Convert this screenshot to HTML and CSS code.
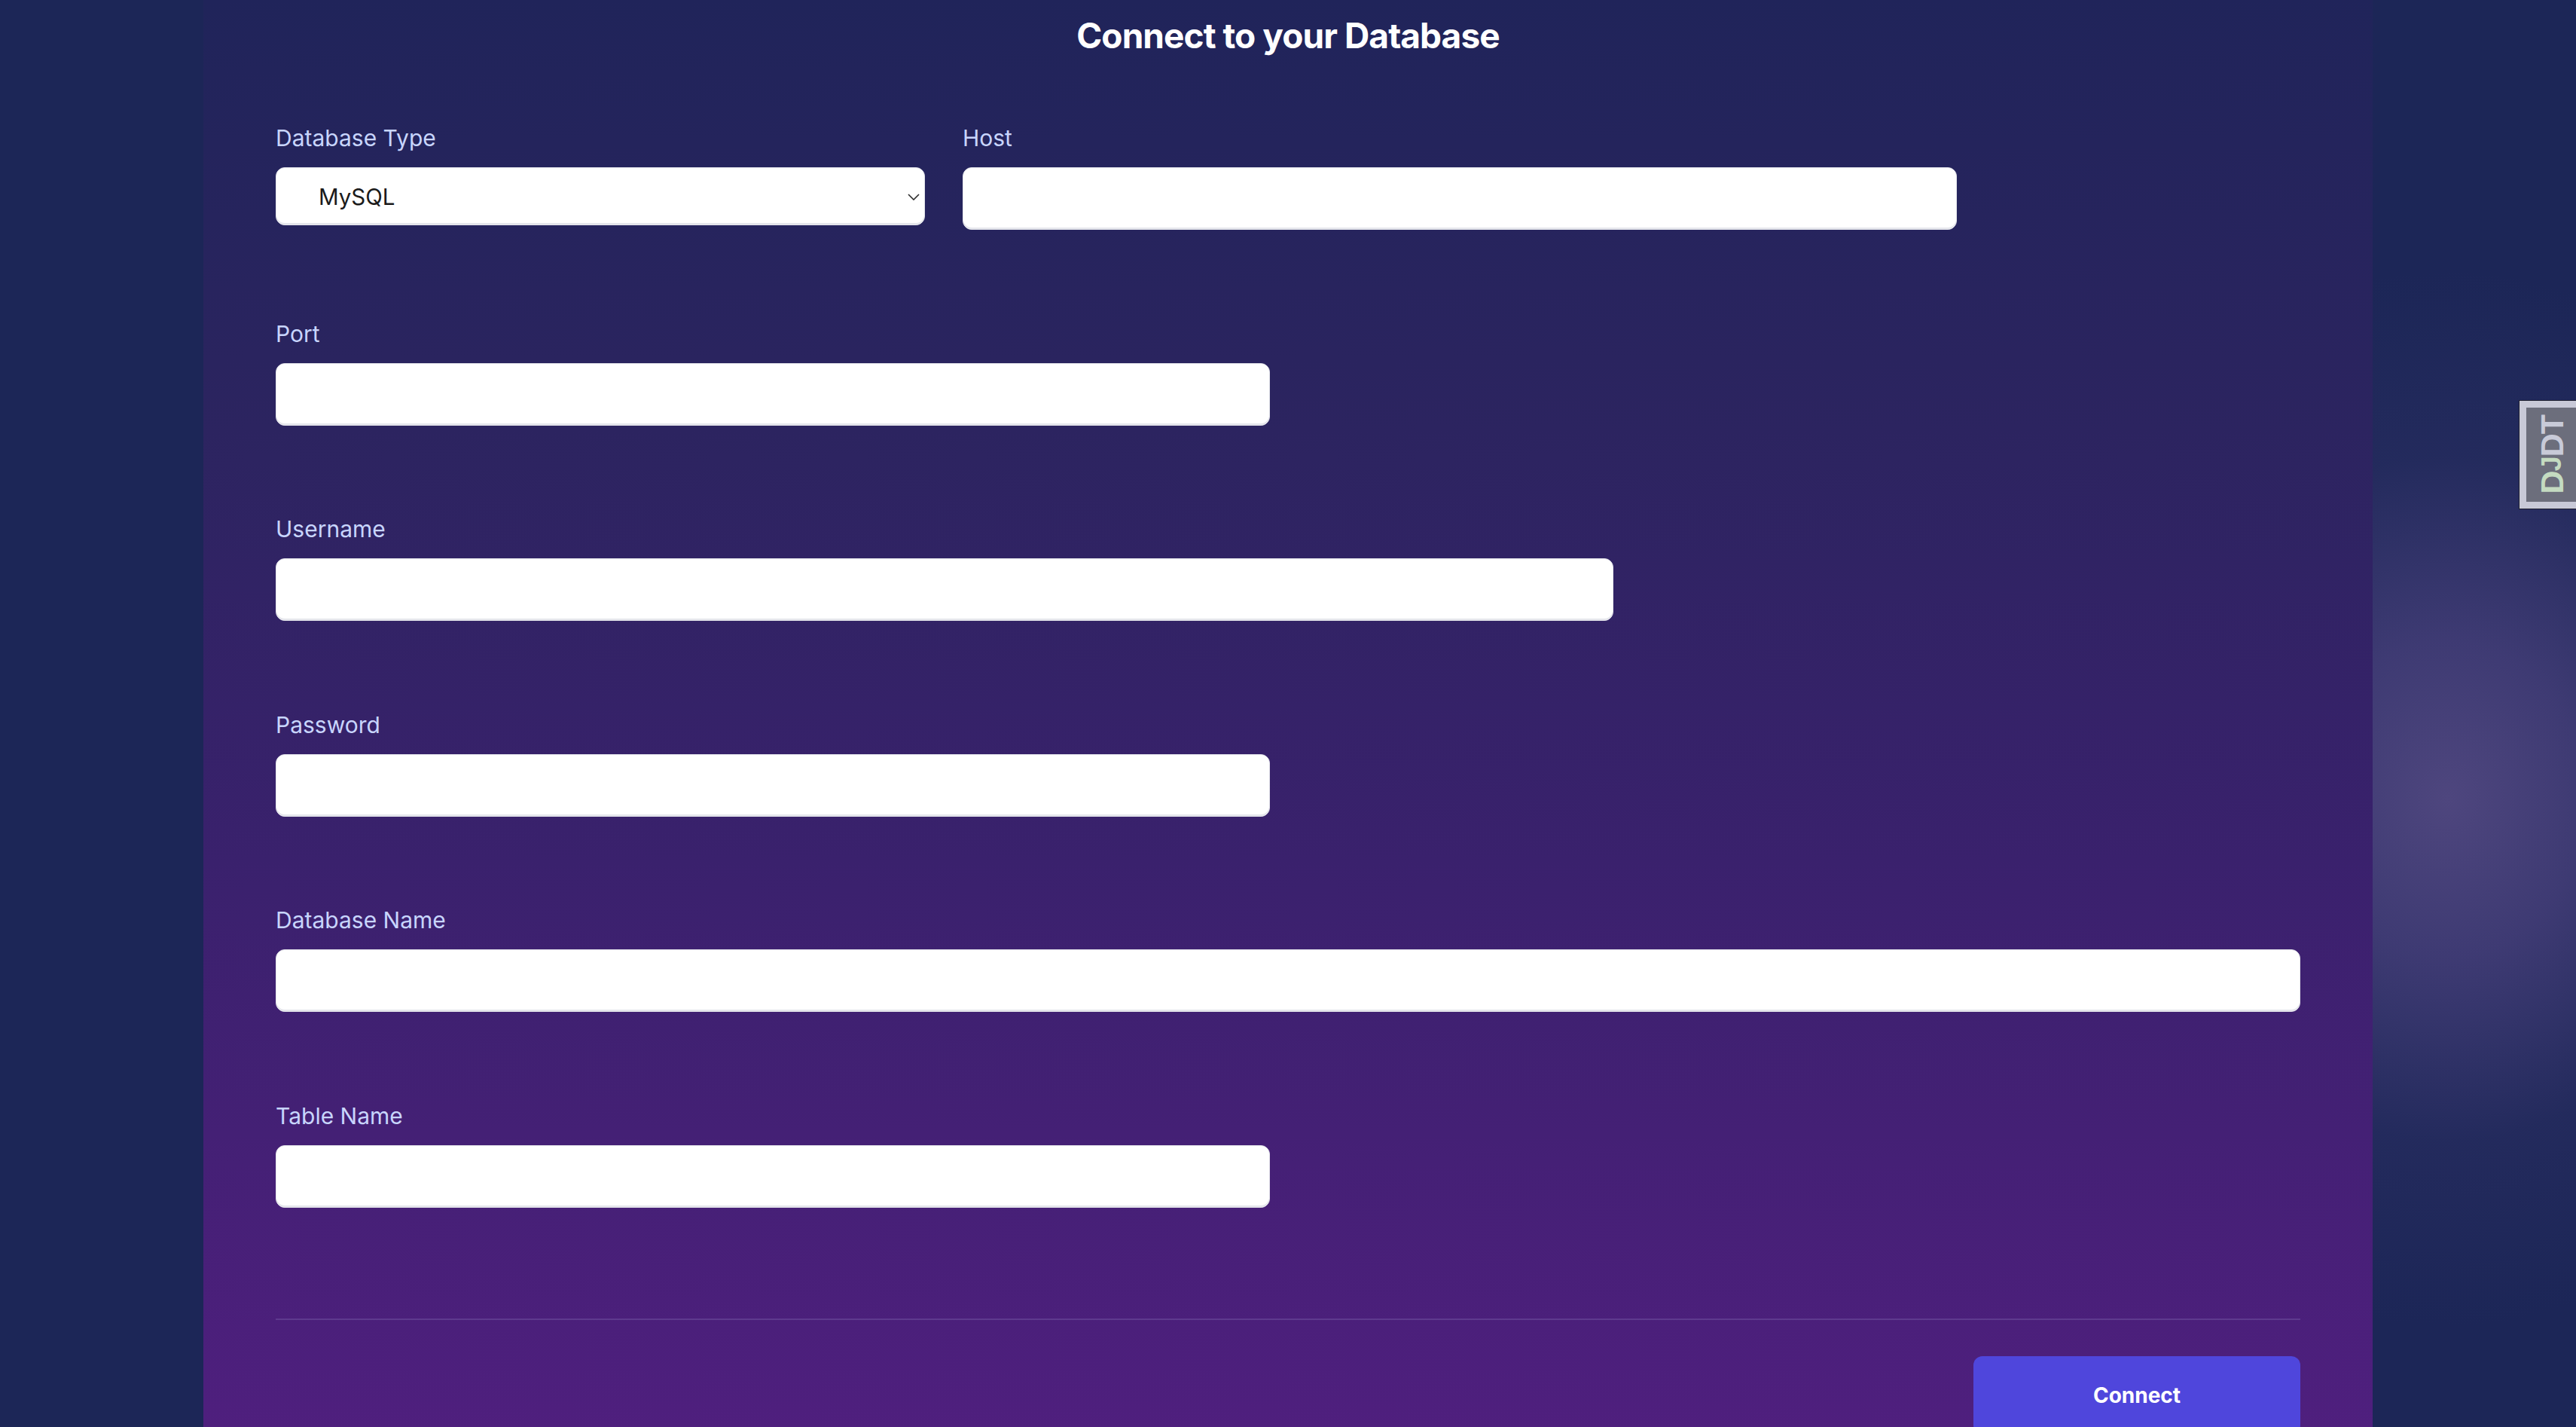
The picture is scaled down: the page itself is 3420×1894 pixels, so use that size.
FILE: index.html
```html
<!DOCTYPE html>
<html lang="en">
<head>
<meta charset="utf-8">
<title>Connect to your Database</title>
<link rel="stylesheet" href="styles.css">
</head>
<body>
<main class="card">
  <h1 class="title">Connect to your Database</h1>
  <form class="form">
    <div class="row">
      <div class="field">
        <label class="label" for="dbtype">Database Type</label>
        <div class="select-wrap">
          <select id="dbtype" class="select">
            <option>MySQL</option>
            <option>PostgreSQL</option>
            <option>SQLite</option>
          </select>
          <svg class="chevron" viewBox="0 0 16 9" width="16" height="9" aria-hidden="true"><path d="M1 1l7 7 7-7" fill="none" stroke="#2b2b2b" stroke-width="1.6"/></svg>
        </div>
      </div>
      <div class="field">
        <label class="label" for="host">Host</label>
        <input id="host" class="input w-host" type="text">
      </div>
    </div>
    <div class="field">
      <label class="label" for="port">Port</label>
      <input id="port" class="input w-half" type="text">
    </div>
    <div class="field">
      <label class="label" for="user">Username</label>
      <input id="user" class="input w-user" type="text">
    </div>
    <div class="field">
      <label class="label" for="pass">Password</label>
      <input id="pass" class="input w-half" type="password">
    </div>
    <div class="field">
      <label class="label" for="dbname">Database Name</label>
      <input id="dbname" class="input w-full" type="text">
    </div>
    <div class="field">
      <label class="label" for="table">Table Name</label>
      <input id="table" class="input w-half" type="text">
    </div>
    <hr class="divider">
    <div class="actions">
      <button class="btn" type="button">Connect</button>
    </div>
  </form>
</main>
<div class="djdt"><div class="djdt-inner"><span class="djdt-text"><span class="djdt-d">D</span><span class="djdt-j">J</span>DT</span></div></div>
</body>
</html>
```

FILE: styles.css
```css
html, body {
  margin: 0;
  padding: 0;
}
body {
  min-height: 100vh;
  overflow: hidden;
  font-family: Inter, "Noto Sans", "Liberation Sans", sans-serif;
  background-color: #1c2657;
  background-image: radial-gradient(ellipse 600px 700px at 3250px 1060px, rgba(78, 70, 126, 1) 0%, rgba(68, 62, 120, 0.85) 30%, rgba(44, 48, 100, 0.45) 65%, rgba(28, 38, 87, 0) 100%);
}
.card {
  box-sizing: border-box;
  width: 2880px;
  min-height: 1894px;
  margin: 0 auto;
  padding: 18.5px 96px 0;
  background: linear-gradient(180deg, #20245a 0%, #2c2460 30%, #3a216d 60%, #4f1f7e 100%);
}
.title {
  margin: 0;
  font-size: 46px;
  line-height: 56px;
  font-weight: 700;
  letter-spacing: -0.02em;
  color: #ffffff;
  text-align: center;
}
.form {
  margin-top: 88.5px;
}
.row {
  display: flex;
  gap: 50px;
}
.field {
  display: flex;
  flex-direction: column;
  align-items: flex-start;
  margin-bottom: 117.5px;
}
.label {
  font-size: 30px;
  line-height: 40px;
  color: #c8d5fd;
  margin-bottom: 19px;
}
.input, .select {
  box-sizing: border-box;
  height: 83px;
  background: #ffffff;
  border: 1px solid #e4e5eb;
  border-radius: 12px;
  box-shadow: inset 0 -2px 0 #e4e5eb;
  font-family: inherit;
  font-size: 28px;
  color: #111827;
  padding: 0 20px;
  outline: none;
}
.w-host { width: 1320px; }
.w-half { width: 1320px; }
.w-user { width: 1776px; }
.w-full { width: 2688px; }
.select-wrap {
  position: relative;
  width: 862px;
}
.select {
  -webkit-appearance: none;
  appearance: none;
  width: 862px;
  height: 77px;
  padding: 0 0 0 56px;
  font-size: 29.5px;
  color: #1a1a1a;
}
.chevron {
  position: absolute;
  right: 7px;
  top: 35px;
  pointer-events: none;
}
.divider {
  margin: 147px 0 0;
  border: 0;
  height: 2px;
  background: #5e3a8e;
}
.actions {
  display: flex;
  justify-content: flex-end;
  margin-top: 48px;
}
.btn {
  width: 434px;
  height: 104px;
  border: 0;
  border-radius: 12px;
  background: #4f46dc;
  color: #ffffff;
  font-family: inherit;
  font-size: 28px;
  font-weight: 700;
}
.djdt {
  position: fixed;
  left: 3344px;
  top: 531px;
  width: 120px;
  height: 145px;
  box-sizing: border-box;
  background: #1e1f2e;
  padding: 1px 0 1px 1px;
}
.djdt-inner {
  box-sizing: border-box;
  display: flex;
  align-items: center;
  height: 143px;
  background: #6c6e7c;
  border: 9px solid #c8c9d7;
  border-right: 0;
  padding-left: 12px;
}
.djdt-text {
  writing-mode: vertical-rl;
  transform: rotate(180deg);
  font-family: "Liberation Sans", Arial, sans-serif;
  font-weight: 700;
  font-size: 43px;
  line-height: 43px;
  letter-spacing: -1px;
  color: #c8cad8;
  white-space: nowrap;
}
.djdt-d { color: #c4dbc1; }
.djdt-j { color: #c4dbc1; font-size: 36px; }
```
